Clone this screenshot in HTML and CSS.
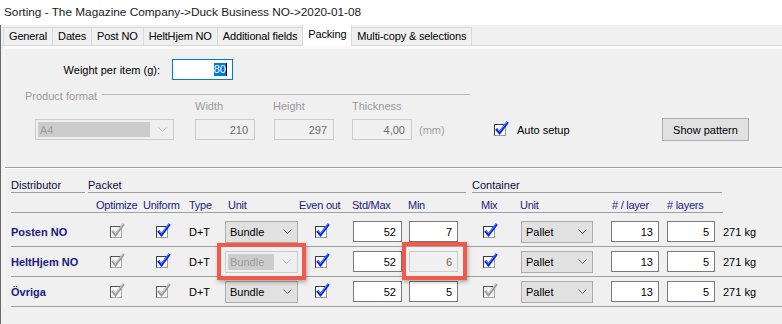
FILE: index.html
```html
<!DOCTYPE html>
<html>
<head>
  <title>Sorting</title>
  <meta charset="UTF-8">
  <link rel="stylesheet" href="styles.css">
</head>
<body>
  <svg class="defs" aria-hidden="true">
    <symbol id="cb-on" viewBox="0 0 15 15">
      <rect x="0.5" y="3.5" width="11" height="11" fill="#fff" stroke="#9a9a9a"/>
      <path d="M0.5 14.5V3.5H11.5" fill="none" stroke="#3a3a3a"/>
      <path d="M2.2 7.9l3.3 3.9 8.2-10.8" fill="none" stroke="#0a22f5" stroke-width="2.8"/>
      <path d="M3.1 7.8l2.4 2.8 7.4-9.7" fill="none" stroke="#5aa8ff" stroke-width="0.9"/>
    </symbol>
    <symbol id="cb-grey" viewBox="0 0 15 15">
      <rect x="0.5" y="3.5" width="11" height="11" fill="#f4f4f4" stroke="#a8a8a8"/>
      <path d="M0.5 14.5V3.5H11.5" fill="none" stroke="#555"/>
      <path d="M2.2 7.9l3.3 3.9 8.2-10.8" fill="none" stroke="#9c9c9c" stroke-width="2.6"/>
      <path d="M3.1 7.8l2.4 2.8 7.4-9.7" fill="none" stroke="#d6d6d6" stroke-width="0.9"/>
    </symbol>
    <symbol id="chev" viewBox="0 0 9 5">
      <path d="M0.5 0.5l4 4 4-4" fill="none" stroke="currentColor"/>
    </symbol>
  </svg>

  <div class="titlebar">Sorting - The Magazine Company-&gt;Duck Business NO-&gt;2020-01-08</div>

  <div class="window">
    <div class="tabs">
      <div class="tab">General</div>
      <div class="tab">Dates</div>
      <div class="tab">Post NO</div>
      <div class="tab">HeltHjem NO</div>
      <div class="tab">Additional fields</div>
      <div class="tab active">Packing</div>
      <div class="tab">Multi-copy &amp; selections</div>
    </div>

    <div class="panel">
      <div class="weight-row">
        <span class="weight-label">Weight per item (g):</span>
        <div class="field focus"><span class="sel">80</span><span class="caret"></span></div>
      </div>

      <div class="format">
        <div class="group-head"><span>Product format</span><div class="group-line"></div></div>
        <div class="dim-labels">
          <span class="dim-w">Width</span>
          <span class="dim-h">Height</span>
          <span>Thickness</span>
        </div>
        <div class="format-row">
          <div class="combo disabled format-combo">
            <span class="combo-val">A4</span>
            <svg class="chev"><use href="#chev"/></svg>
          </div>
          <div class="field disabled dim dim-1">210</div>
          <div class="field disabled dim dim-2">297</div>
          <div class="field disabled dim dim-3">4,00</div>
          <span class="unit-note">(mm)</span>
          <div class="auto"><svg class="cb"><use href="#cb-on"/></svg>Auto setup</div>
          <button class="btn">Show pattern</button>
        </div>
      </div>

      <div class="separator"></div>

      <div class="packing">
        <div class="groups">
          <div class="group g-dist">Distributor</div>
          <div class="group g-packet">Packet</div>
          <div class="group g-container">Container</div>
        </div>

        <div class="cols">
          <span></span>
          <span>Optimize</span>
          <span>Uniform</span>
          <span>Type</span>
          <span class="pad3">Unit</span>
          <span>Even out</span>
          <span>Std/Max</span>
          <span>Min</span>
          <span>Mix</span>
          <span>Unit</span>
          <span class="pad1"># / layer</span>
          <span># layers</span>
        </div>

        <div class="row">
          <span class="name">Posten NO</span>
          <svg class="cb c-opt"><use href="#cb-grey"/></svg>
          <svg class="cb c-uni"><use href="#cb-on"/></svg>
          <span>D+T</span>
          <div class="combo unit-p"><span>Bundle</span><svg class="chev"><use href="#chev"/></svg></div>
          <svg class="cb c-even"><use href="#cb-on"/></svg>
          <div class="field num">52</div>
          <div class="field num">7</div>
          <svg class="cb c-mix"><use href="#cb-on"/></svg>
          <div class="combo unit-c"><span>Pallet</span><svg class="chev"><use href="#chev"/></svg></div>
          <div class="field num layer">13</div>
          <div class="field num layer">5</div>
          <span>271 kg</span>
        </div>

        <div class="row">
          <span class="name">HeltHjem NO</span>
          <svg class="cb c-opt"><use href="#cb-grey"/></svg>
          <svg class="cb c-uni"><use href="#cb-on"/></svg>
          <span>D+T</span>
          <div class="combo disabled unit-p mark mark-combo">
            <span class="combo-val">Bundle</span>
            <svg class="chev"><use href="#chev"/></svg>
          </div>
          <svg class="cb c-even"><use href="#cb-on"/></svg>
          <div class="field num">52</div>
          <div class="field num disabled mark mark-field">6</div>
          <svg class="cb c-mix"><use href="#cb-on"/></svg>
          <div class="combo unit-c"><span>Pallet</span><svg class="chev"><use href="#chev"/></svg></div>
          <div class="field num layer">13</div>
          <div class="field num layer">5</div>
          <span>271 kg</span>
        </div>

        <div class="row">
          <span class="name">Övriga</span>
          <svg class="cb c-opt"><use href="#cb-grey"/></svg>
          <svg class="cb c-uni"><use href="#cb-grey"/></svg>
          <span>D+T</span>
          <div class="combo unit-p"><span>Bundle</span><svg class="chev"><use href="#chev"/></svg></div>
          <svg class="cb c-even"><use href="#cb-on"/></svg>
          <div class="field num">52</div>
          <div class="field num">5</div>
          <svg class="cb c-mix"><use href="#cb-grey"/></svg>
          <div class="combo unit-c"><span>Pallet</span><svg class="chev"><use href="#chev"/></svg></div>
          <div class="field num layer">13</div>
          <div class="field num layer">5</div>
          <span>271 kg</span>
        </div>
      </div>
    </div>
  </div>
</body>
</html>
```

FILE: styles.css
```css
body {
  margin: 0;
  width: 782px;
  height: 324px;
  overflow: hidden;
  font-family: "Liberation Sans", Arial, sans-serif;
  font-size: 11px;
  color: #000;
  background: #f0f0f0;
}

.defs {
  position: absolute;
  width: 0;
  height: 0;
}

/* title */
.titlebar {
  height: 25px;
  line-height: 25px;
  padding-left: 4px;
  background: #fff;
  font-size: 11.8px;
  color: #1a1a1a;
}

.window {
  box-sizing: border-box;
  height: 299px;
  border-left: 1px solid #6b6b6b;
  overflow: hidden;
}

/* tabs */
.tabs {
  display: flex;
  align-items: flex-end;
  height: 20px;
  padding-left: 2px;
  border-bottom: 1px solid #d9d9d9;
}

.tab {
  height: 17px;
  line-height: 17px;
  padding: 0 5px;
  border: 1px solid #d9d9d9;
  border-bottom: none;
  margin-right: -1px;
  background: #f0f0f0;
  color: #000;
  letter-spacing: -0.15px;
}

.tab.active {
  position: relative;
  height: 21px;
  line-height: 18px;
  margin-bottom: -1px;
  background: #fff;
  z-index: 1;
}

/* page */
.panel {
  margin-left: 3px;
  padding-top: 10px;
  border-top: 3px solid #fafafa;
  border-left: 1px solid #fafafa;
}

.weight-row {
  display: flex;
  align-items: center;
  height: 21px;
}

.weight-label {
  width: 155px;
  margin-right: 12px;
  text-align: right;
}

.field {
  box-sizing: border-box;
  height: 21px;
  display: flex;
  align-items: center;
  justify-content: flex-end;
  padding-right: 5px;
  background: #fff;
  border: 1px solid #7a7a7a;
}

.field.focus {
  width: 61px;
  border-color: #0078d7;
}

.field.focus .sel {
  background: #0078d7;
  color: #fff;
  line-height: 13px;
}

.field.focus .caret {
  width: 1px;
  height: 13px;
  background: #000;
}

.field.disabled {
  background: #f0f0f0;
  border-color: #cccccc;
  color: #6d6d6d;
}

/* product format */
.group-head {
  display: flex;
  align-items: center;
  margin-top: 10px;
  padding-left: 20px;
  line-height: 13px;
  color: #9a9a9a;
}

.group-line {
  width: 368px;
  height: 1px;
  margin-left: 5px;
  margin-bottom: 5px;
  background: #b8b8b8;
}

.dim-labels {
  display: flex;
  margin-top: -3px;
  padding-left: 190px;
  line-height: 13px;
  color: #9a9a9a;
}

.dim-w {
  width: 78px;
}

.dim-h {
  width: 79px;
}

.format-row {
  display: flex;
  align-items: center;
  height: 23px;
  margin-top: 5px;
}

.combo {
  box-sizing: border-box;
  height: 22px;
  display: flex;
  align-items: center;
  justify-content: space-between;
  padding: 0 5px 0 4px;
  background: #e1e1e1;
  border: 1px solid #adadad;
  color: #606060;
}

.combo span {
  color: #000;
}

.combo.disabled {
  padding: 2px 6px 2px 2px;
  background: #efefef;
  border-color: #cccccc;
  color: #bdbdbd;
}

.combo.disabled .combo-val {
  align-self: stretch;
  display: flex;
  align-items: center;
  flex: 1;
  margin-right: 8px;
  padding-left: 2px;
  background: #cccccc;
  color: #9d9d9d;
}

.chev {
  width: 9px;
  height: 5px;
  flex: none;
}

.format-combo {
  width: 139px;
  height: 21px;
  margin-left: 30px;
}

.dim {
  width: 60px;
  padding-right: 6px;
}

.dim-1 {
  margin-left: 21px;
}

.dim-2 {
  margin-left: 19px;
}

.dim-3 {
  margin-left: 18px;
}

.unit-note {
  width: 75px;
  margin-left: 7px;
  color: #a0a0a0;
}

.auto {
  display: flex;
  align-items: center;
  width: 168px;
}

.cb {
  width: 15px;
  height: 15px;
  flex: none;
}

.auto .cb {
  margin-right: 8px;
  margin-top: -3px;
}

.btn {
  box-sizing: border-box;
  width: 87px;
  height: 23px;
  padding: 0;
  font-family: inherit;
  font-size: 11px;
  color: #000;
  background: #e1e1e1;
  border: 1px solid #adadad;
}

.separator {
  margin-top: 26px;
  height: 1px;
  background: #a0a0a0;
  border-bottom: 1px solid #fff;
}

/* packing table */
.packing {
  padding-left: 6px;
}

.groups {
  display: flex;
  margin-top: 9px;
}

.group {
  height: 14px;
  line-height: 14px;
  border-bottom: 1px solid #a0a0a0;
  color: #0c0c3c;
}

.g-dist {
  width: 74px;
}

.g-packet {
  width: 378px;
  margin-left: 3px;
}

.g-container {
  width: 250px;
  margin-left: 6px;
}

.cols,
.row {
  display: grid;
  grid-template-columns: 85px 47px 46px 36px 74px 53px 56px 73px 39px 91px 56px 56px 45px;
  align-items: center;
}

.cols {
  width: 712px;
  grid-template-columns: 85px 47px 46px 36px 74px 53px 56px 73px 39px 91px 56px 56px;
  margin-top: 5px;
  height: 14px;
  line-height: 14px;
  border-bottom: 1px solid #a0a0a0;
  color: #1c1c7c;
  letter-spacing: -0.25px;
}

.pad3 {
  padding-left: 3px;
}

.pad1 {
  padding-left: 1px;
}

.row {
  height: 29px;
  border-bottom: 1px solid #a0a0a0;
}

.cols + .row {
  margin-top: 4px;
}

.name {
  font-weight: bold;
  color: #1a1a80;
}

.c-opt {
  margin-left: 14px;
  margin-top: -2px;
}

.c-uni {
  margin-left: 13px;
  margin-top: -2px;
}

.c-even {
  margin-left: 16px;
  margin-top: -2px;
}

.c-mix {
  margin-left: 2px;
  margin-top: -2px;
}

.unit-p {
  width: 73px;
}

.unit-c {
  width: 72px;
  margin-left: 1px;
}

.num {
  width: 49px;
  margin-left: 1px;
}

.num.layer {
  width: 48px;
  margin-left: 0;
}

/* red call-out boxes */
.mark {
  position: relative;
}

.mark::after {
  content: "";
  position: absolute;
  border: 4px solid #ef5a4c;
  box-shadow: 1px 2px 4px rgba(0, 0, 0, 0.3);
}

.mark-combo::after {
  top: -9px;
  right: -9px;
  bottom: -8px;
  left: -9px;
}

.mark-field::after {
  top: -10px;
  right: -10px;
  bottom: -9px;
  left: -8px;
}
```
